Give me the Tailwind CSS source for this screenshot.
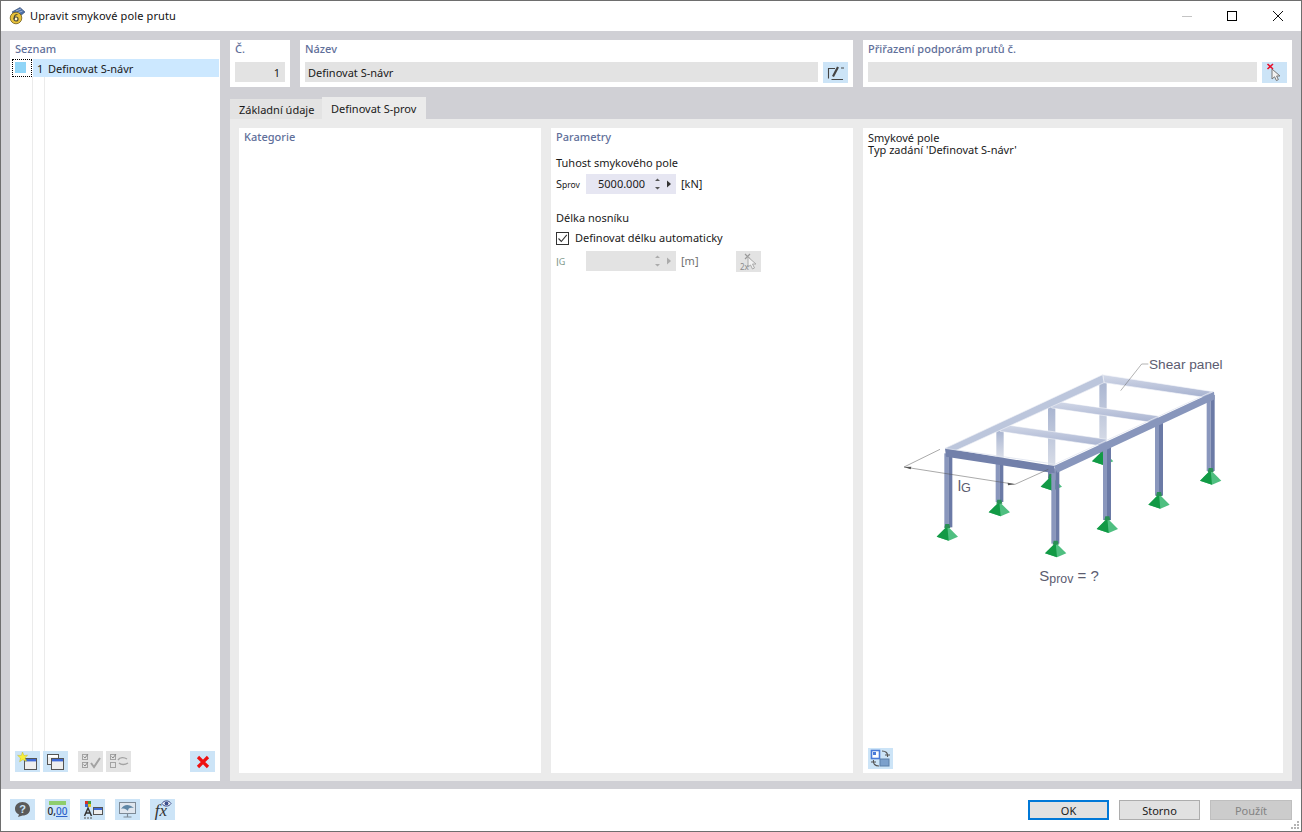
<!doctype html>
<html lang="cs">
<head>
<meta charset="UTF-8" />
<title>Upravit smykové pole prutu</title>
<script src="https://cdn.jsdelivr.net/npm/@tailwindcss/browser@4"></script>
</head>
<body class="bg-white">
<div class="w-[1302px] h-[832px] flex flex-col border border-[#6e6e6e] bg-white overflow-hidden font-['Noto_Sans',sans-serif] text-[11px] leading-4 text-[#1a1a1a]">

    <!-- Title bar -->
    <div class="h-[30px] shrink-0 flex items-center pl-[7px]">
        <svg width="18" height="18" viewBox="0 0 18 18">
            <path d="M4 5 L12 0.5 L17 5 L11 10Z" fill="#4d6fa8" stroke="#2f4468" stroke-width=".6"/>
            <path d="M8 4 L13 2 M9 6 L14.5 4" stroke="#b9c8e0" stroke-width=".8"/>
            <circle cx="8" cy="11" r="5.8" fill="#e8c23a" stroke="#6e5c17" stroke-width=".8"/>
            <circle cx="8" cy="12" r="2" fill="#fff6c8" stroke="#4a4a3a" stroke-width="1.2"/>
            <path d="M6.2 12 C6 8.5 7.5 7.5 9.5 7.5" fill="none" stroke="#4a4a3a" stroke-width="1.2"/>
        </svg>
        <span class="ml-[4px] text-[#111] tracking-[0.12px]">Upravit smykové pole prutu</span>
        <div class="ml-auto flex items-center">
            <div class="w-[10px] h-px bg-[#c4c4c4] mr-[35px]"></div>
            <div class="w-[10px] h-[10px] border border-black mr-[36px]"></div>
            <svg class="mr-[18px]" width="10" height="10" viewBox="0 0 10 10"><path d="M0 0 L10 10 M10 0 L0 10" stroke="#111" stroke-width="1"/></svg>
        </div>
    </div>

    <!-- Main area -->
    <div class="h-[758px] shrink-0 bg-[#d0d0d5] pl-[9px] pr-[9px] pt-[9px] pb-[8px] flex gap-[10px]">

        <!-- List -->
        <div class="w-[210px] bg-white flex flex-col">
            <div class="h-[19px] pl-[5px] pt-px font-medium text-[#5f6f9a]">Seznam</div>
            <div class="h-[18px] flex items-stretch">
                <div class="ml-[2px] w-[20px] border border-dotted border-black pl-[2px] pt-[2px]">
                    <div class="w-[11px] h-[11px] bg-[#90d5f7]"></div>
                </div>
                <div class="flex-1 mr-px ml-px bg-[#cce8ff] flex items-center pl-[4px] pt-px">
                    <span class="w-[11px]">1</span><span>Definovat S-návr</span>
                </div>
            </div>
            <div class="h-[674px] flex">
                <div class="ml-[22px] w-px bg-[#ebebeb]"></div>
                <div class="ml-[11px] w-px bg-[#ebebeb]"></div>
            </div>
            <div class="h-[21px] flex pl-[5px]">
                <div class="w-[25px] h-[21px] bg-[#cce4f7] flex items-center justify-center">
                    <svg width="21" height="19" viewBox="0 0 21 19">
                        <rect x="7.5" y="6.5" width="12" height="11" fill="#eee" stroke="#555"/>
                        <rect x="8" y="7" width="11" height="2.4" fill="#3f6ad8"/>
                        <path d="M5.5 0 L7 3.6 L10.6 3 L8 6 L9.6 9.2 L5.8 7.8 L2.6 9.8 L3.4 6 L.6 3.4 L4.3 3.4Z" fill="#f7ef3a" stroke="#b9ae1e" stroke-width=".4"/>
                    </svg>
                </div>
                <div class="ml-[3px] w-[25px] h-[21px] bg-[#cce4f7] flex items-center justify-center">
                    <svg width="21" height="19" viewBox="0 0 21 19">
                        <rect x="2.5" y="2.5" width="11" height="10" fill="#eee" stroke="#555"/>
                        <rect x="3" y="3" width="10" height="2.2" fill="#fff"/>
                        <rect x="6.5" y="6.5" width="12" height="11" fill="#eee" stroke="#555"/>
                        <rect x="7" y="7" width="11" height="2.4" fill="#3f6ad8"/>
                    </svg>
                </div>
                <div class="ml-[10px] w-[25px] h-[21px] bg-[#e3e3e3] flex items-center justify-center">
                    <svg width="21" height="19" viewBox="0 0 21 19" fill="none" stroke="#a3a3a3">
                        <rect x="2.5" y="2.5" width="5" height="5"/><rect x="2.5" y="10.5" width="5" height="5"/>
                        <path d="M3.5 4.5 L5 6 L8 2 M3.5 12.5 L5 14 L8 10" stroke="#8a8a8a"/>
                        <path d="M11 11 L14 15 L20 6" stroke-width="2"/>
                    </svg>
                </div>
                <div class="ml-[3px] w-[25px] h-[21px] bg-[#e3e3e3] flex items-center justify-center">
                    <svg width="21" height="19" viewBox="0 0 21 19" fill="none" stroke="#a3a3a3">
                        <rect x="2.5" y="2.5" width="5" height="5"/><rect x="2.5" y="10.5" width="5" height="5"/>
                        <path d="M3.5 4.5 L5 6 L8 2" stroke="#8a8a8a"/>
                        <path d="M10 8 C12 5 16 5 19 7 M20 11 C17 13 13 13 11 11" stroke-width="1.4"/>
                    </svg>
                </div>
                <div class="ml-[59px] w-[25px] h-[21px] bg-[#cce4f7] flex items-center justify-center">
                    <svg width="14" height="14" viewBox="0 0 14 14"><path d="M2 2 L12 12 M12 2 L2 12" stroke="#ee1111" stroke-width="3.2"/></svg>
                </div>
            </div>
        </div>

        <!-- Right column -->
        <div class="w-[1062px] flex flex-col">
            <!-- Top cards -->
            <div class="h-[47px] flex gap-[10px]">
                <div class="w-[60px] bg-white px-[5px] flex flex-col">
                    <div class="h-[22px] pt-px font-medium text-[#5f6f9a]">Č.</div>
                    <div class="h-[20px] bg-[#e3e3e3] flex items-center justify-end pr-[5px] pt-px">1</div>
                </div>
                <div class="w-[553px] bg-white px-[5px] flex flex-col">
                    <div class="h-[22px] pt-px font-medium text-[#5f6f9a]">Název</div>
                    <div class="flex gap-[5px]">
                        <div class="w-[513px] h-[20px] bg-[#e3e3e3] flex items-center pl-[3px] pt-px">Definovat S-návr</div>
                        <div class="w-[25px] h-[21px] bg-[#cce4f7] flex items-center justify-center">
                            <svg width="19" height="17" viewBox="0 0 19 17" fill="none" stroke="#444">
                                <path d="M9 4.5 H2.5 V14.5 M5.5 15.5 H17" stroke-width="1.1"/>
                                <path d="M7 12.5 L12 3" stroke-width="2.2"/><path d="M15 4 H18" stroke-width="1"/>
                            </svg>
                        </div>
                    </div>
                </div>
                <div class="w-[429px] bg-white px-[5px] flex flex-col">
                    <div class="h-[22px] pt-px font-medium text-[#5f6f9a]">Přiřazení podporám prutů č.</div>
                    <div class="flex gap-[5px]">
                        <div class="w-[389px] h-[20px] bg-[#e3e3e3]"></div>
                        <div class="w-[25px] h-[21px] bg-[#cce4f7] flex items-center justify-center">
                            <svg width="19" height="19" viewBox="0 0 19 19">
                                <path d="M7 6 L7 16 L9.6 13.8 L11.4 17.6 L13.4 16.6 L11.6 13 L15 13Z" fill="#f2f2f2" stroke="#777"/>
                                <path d="M2.5 1 L8 6 M8 1 L2.5 6" stroke="#e8112d" stroke-width="1.6"/>
                            </svg>
                        </div>
                    </div>
                </div>
            </div>

            <!-- Tabs -->
            <div class="h-[32px] pt-[10px] flex items-end">
                <div class="w-[92px] h-[20px] bg-[#e3e3e3] pl-[9px] flex items-center pt-px">Základní údaje</div>
                <div class="w-[104px] h-[22px] bg-[#ebebeb] pl-[9px] flex items-center pt-px">Definovat S-prov</div>
            </div>

            <!-- Tab body -->
            <div class="h-[662px] bg-[#ebebeb] pt-[9px] pb-[8px] pl-[9px] pr-[9px] flex gap-[10px]">
                <div class="w-[302px] bg-white pl-[5px] pt-px font-medium text-[#5f6f9a]">Kategorie</div>

                <div class="w-[302px] bg-white pl-[5px] pt-px flex flex-col">
                    <div class="h-[16px] font-medium text-[#5f6f9a]">Parametry</div>
                    <div class="mt-[10px] h-[16px]">Tuhost smykového pole</div>
                    <div class="mt-[3px] h-[20px] flex items-center">
                        <span class="w-[30px] text-[#1a1a1a]">S<span class="text-[8.5px]">prov</span></span>
                        <div class="w-[90px] h-[20px] bg-[#e6e6f2] flex items-center justify-end pr-[4px]">
                            <span class="mr-[7px]">5000.000</span>
                            <svg width="20" height="14" viewBox="0 0 20 14" fill="#555">
                                <path d="M3 4 L5.5 1.5 L8 4Z M3 10 L5.5 12.5 L8 10Z"/><path d="M15 3.5 L19 7 L15 10.5Z" fill="#333"/>
                            </svg>
                        </div>
                        <span class="ml-[5px]">[kN]</span>
                    </div>
                    <div class="mt-[16px] h-[16px]">Délka nosníku</div>
                    <div class="mt-[5px] h-[14px] flex items-center">
                        <div class="w-[13px] h-[13px] border border-[#333] flex items-center justify-center">
                            <svg width="11" height="11" viewBox="0 0 11 11" fill="none"><path d="M1.5 5.5 L4.3 8.5 L9.8 1.8" stroke="#333" stroke-width="1.1"/></svg>
                        </div>
                        <span class="ml-[6px]">Definovat délku automaticky</span>
                    </div>
                    <div class="mt-[6px] h-[21px] flex items-start">
                        <span class="w-[30px] h-[20px] flex items-center pt-px text-[#7f9a8c]">l<span class="text-[9px]">G</span></span>
                        <div class="w-[90px] h-[20px] bg-[#e3e3e3] flex items-center justify-end pr-[4px]">
                            <svg width="20" height="14" viewBox="0 0 20 14" fill="#ababab">
                                <path d="M3 4 L5.5 1.5 L8 4Z M3 10 L5.5 12.5 L8 10Z"/><path d="M15 3.5 L19 7 L15 10.5Z"/>
                            </svg>
                        </div>
                        <span class="w-[60px] pl-[5px] h-[20px] flex items-center text-[#707070]">[m]</span>
                        <div class="w-[25px] h-[21px] bg-[#e3e3e3]">
                            <svg width="25" height="21" viewBox="0 0 25 21">
                                <path d="M9 3 L14 8 M14 3 L9 8" stroke="#9a9a9a" stroke-width="1.2"/>
                                <path d="M12 6 L12 16 L14.5 14 L16.5 18 L18.5 17 L16.5 13 L20 13Z" fill="#f2f2f2" stroke="#aaa"/>
                                <text x="4" y="19" font-size="8" fill="#8a8a8a" font-family="Noto Sans">2x</text>
                            </svg>
                        </div>
                    </div>
                </div>

                <!-- Preview -->
                <div class="w-[420px] bg-white flex flex-col">
                    <div class="pl-[5px] pt-[4px] h-[181px] leading-[12px]">Smykové pole<br />Typ zadání 'Definovat S-návr'</div>
                    <svg class="ml-[17px] mt-[31px] shrink-0" width="360" height="260" viewBox="0 0 1080 780">
                        <defs>
                            <linearGradient id="beamLight" x1="0" y1="0" x2="0" y2="1"><stop offset="0" stop-color="#d3d9e8"/><stop offset="1" stop-color="#a6b1cf"/></linearGradient>
                            <linearGradient id="colLight" x1="0" y1="0" x2="0" y2="1"><stop offset="0" stop-color="#a8b4d0"/><stop offset="1" stop-color="#dde1ea"/></linearGradient>
                            <g id="base">
                                <path d="M-32 12 L0 -20 L32 12 L4 24Z" fill="#4fbf80"/>
                                <path d="M-32 12 L0 -20 L4 24Z" fill="#129a45"/>
                                <path d="M-9 -14 H9 L6 -26 H-6Z" fill="#2a8f55"/>
                            </g>
                        </defs>
                        <!-- back columns, seen through the frame -->
                        <rect x="658" y="118" width="22" height="220" fill="url(#colLight)"/>
                        <rect x="504" y="198" width="22" height="200" fill="url(#colLight)"/>
                        <rect x="349" y="270" width="22" height="90" fill="url(#colLight)"/>
                        <rect x="504" y="395" width="22" height="30" fill="#7886ad"/>
                        <rect x="660" y="325" width="20" height="22" fill="#7886ad"/>
                        <use href="#base" x="668" y="352"/>
                        <use href="#base" x="514" y="428"/>
                        <!-- light beams -->
                        <path d="M360 252 L680 298 L680 320 L360 274Z" fill="url(#beamLight)" stroke="#fff" stroke-width="1.5"/>
                        <path d="M515 182 L835 228 L835 250 L515 204Z" fill="url(#beamLight)" stroke="#fff" stroke-width="1.5"/>
                        <path d="M668 104 L1000 155 L972 172 L672 128Z" fill="url(#beamLight)" stroke="#f4f6fa" stroke-width="2"/>
                        <path d="M195 325 L668 104 L672 128 L222 334Z" fill="#bcc6dc" stroke="#eef0f6" stroke-width="2"/>
                        <!-- front columns -->
                        <rect x="193" y="340" width="12" height="222" fill="#8a97bd"/><rect x="205" y="345" width="12" height="217" fill="#6b7aa6"/>
                        <rect x="347" y="370" width="11" height="116" fill="#8a97bd"/><rect x="358" y="370" width="12" height="116" fill="#6b7aa6"/>
                        <rect x="825" y="245" width="12" height="222" fill="#8a97bd"/><rect x="837" y="245" width="12" height="222" fill="#6b7aa6"/>
                        <rect x="980" y="165" width="12" height="228" fill="#8a97bd"/><rect x="992" y="165" width="12" height="228" fill="#6b7aa6"/>
                        <rect x="669" y="322" width="12" height="218" fill="#8a97bd"/><rect x="681" y="316" width="12" height="224" fill="#6b7aa6"/>
                        <rect x="514" y="385" width="12" height="226" fill="#8a97bd"/><rect x="526" y="385" width="12" height="226" fill="#6b7aa6"/>
                        <!-- front beams -->
                        <path d="M195 325 L522 378 L524 400 L198 350Z" fill="#7280aa"/>
                        <path d="M195 325 L522 372" stroke="#dfe3ee" stroke-width="2.5"/>
                        <path d="M522 378 L1002 155 L1004 178 L532 398Z" fill="#8896bc"/>
                        <path d="M522 374 L1000 153" stroke="#e3e7f1" stroke-width="2.5"/>
                        <!-- supports -->
                        <use href="#base" x="202" y="578"/>
                        <use href="#base" x="358" y="505"/>
                        <use href="#base" x="527" y="628"/>
                        <use href="#base" x="682" y="555"/>
                        <use href="#base" x="837" y="482"/>
                        <use href="#base" x="992" y="410"/>
                        <!-- dimension lines -->
                        <path d="M72 381 L180 328 M72 381 L405 433 M405 433 L505 388" fill="none" stroke="#555" stroke-width="1.5"/>
                        <path d="M72 381 L94 380 L92 388Z M405 433 L383 428 L384 436Z" fill="#555"/>
                        <path d="M722 152 L785 72 L805 72" fill="none" stroke="#666" stroke-width="1.5"/>
                        <text x="807" y="86" font-family="Liberation Sans" font-size="41" fill="#5c5c70">Shear panel</text>
                        <text x="233" y="454" font-family="Liberation Sans" font-size="46" fill="#5c5c70">l<tspan font-size="38" dy="3">G</tspan></text>
                        <text x="478" y="722" font-family="Liberation Sans" font-size="45" fill="#5c5c70">S<tspan font-size="37" dy="6">prov</tspan><tspan dy="-6"> = ?</tspan></text>
                    </svg>
                    <div class="mt-auto ml-[5px] mb-[4px] w-[25px] h-[21px] bg-[#cce4f7] flex items-center justify-center">
                        <svg width="21" height="19" viewBox="0 0 21 19" fill="none">
                            <rect x="1.5" y="1.5" width="8" height="8" fill="#fff" stroke="#4a7bd8" stroke-width="1.6"/>
                            <rect x="3" y="3" width="3" height="3" fill="#4a7bd8"/>
                            <rect x="10" y="10" width="9" height="7" fill="#7ba0cc" stroke="#5a7ea8"/>
                            <path d="M12 2 C16 2 18 4 17.5 8 M15 6 H20 M9 17 C5 17 3 15 3.5 11 M1 13 H6" stroke="#555" stroke-width="1.1"/>
                        </svg>
                    </div>
                </div>
            </div>
        </div>
    </div>

    <!-- Footer -->
    <div class="flex-1 relative flex items-start pt-[10px] pl-[9px]">
        <div class="w-[25px] h-[21px] bg-[#cce4f7] flex items-center justify-center">
            <svg width="17" height="17" viewBox="0 0 17 17">
                <path d="M8.5 1 C13 1 16 4 16 8 C16 12 13 14.5 8.5 14.5 L4 16 L5 13.5 C2.5 12.5 1 10.5 1 8 C1 4 4 1 8.5 1Z" fill="#5a5a5a"/>
                <text x="8.5" y="12" text-anchor="middle" font-family="Liberation Sans" font-weight="bold" font-size="11" fill="#cce4f7">?</text>
            </svg>
        </div>
        <div class="ml-[10px] w-[25px] h-[21px] bg-[#cce4f7] flex flex-col items-center">
            <div class="mt-[2px] w-[17px] h-[4px] bg-[#8fce6c]"></div>
            <div class="text-[10px] leading-[13px] font-medium text-[#222]">0,<span class="text-[#2d62c9] underline">00</span></div>
        </div>
        <div class="ml-[10px] w-[25px] h-[21px] bg-[#cce4f7] flex items-center justify-center">
            <svg width="23" height="19" viewBox="0 0 23 19">
                <rect x="4" y="1" width="3" height="3" fill="#d93025"/><rect x="7" y="1" width="3" height="3" fill="#3a9e3a"/>
                <rect x="4" y="4" width="3" height="3" fill="#3d63c9"/><rect x="7" y="4" width="3" height="3" fill="#e3c21f"/>
                <path d="M3.5 16 L7 8 L10.5 16 M5 13 H9" fill="none" stroke="#333" stroke-width="1.5"/>
                <rect x="12.5" y="7.5" width="9" height="7" fill="#eee" stroke="#555"/><rect x="13" y="8" width="8" height="2" fill="#3f6ad8"/>
                <path d="M3 18 H11" stroke="#555" stroke-dasharray="2 1"/>
            </svg>
        </div>
        <div class="ml-[10px] w-[25px] h-[21px] bg-[#cce4f7] flex items-center justify-center">
            <svg width="21" height="19" viewBox="0 0 21 19">
                <rect x="2.5" y="2.5" width="16" height="11" fill="#dfe6ee" stroke="#7d8a96"/>
                <path d="M4 9 C7 4 12 4 17 8 C13 7 11 8 11 11 C9 9 7 8 4 9Z" fill="#5f87a6"/>
                <path d="M10.5 14 V16.5 M6.5 17 H14.5" stroke="#7d8a96" stroke-width="1.2"/>
            </svg>
        </div>
        <div class="ml-[10px] w-[25px] h-[21px] bg-[#cce4f7] flex items-end justify-center relative">
            <span class="font-['Liberation_Serif',serif] italic text-[17px] leading-[19px] text-[#333] mr-[3px]">fx</span>
            <svg class="absolute right-[3px] top-0" width="11" height="9" viewBox="0 0 11 9">
                <path d="M1 4.5 C3 1 8 1 10 4.5 C8 8 3 8 1 4.5Z" fill="#fff" stroke="#3d4f8c"/>
                <circle cx="5.5" cy="4.5" r="2" fill="#3d4f8c"/>
            </svg>
        </div>

        <div class="ml-auto mr-[9px] mt-px flex gap-[10px]">
            <div class="w-[81px] h-[20px] bg-[#e1e1e1] border-2 border-[#0078d7] flex items-center justify-center pt-px">OK</div>
            <div class="w-[81px] h-[20px] bg-[#e1e1e1] border border-[#adadad] flex items-center justify-center pt-px">Storno</div>
            <div class="w-[82px] h-[20px] bg-[#cccccc] border border-[#bfbfbf] text-[#838383] flex items-center justify-center pt-px">Použít</div>
        </div>
        <svg class="absolute right-px bottom-px" width="10" height="10" viewBox="0 0 10 10" fill="#b4b4b4">
            <rect x="7" y="1" width="2" height="2"/><rect x="4" y="4" width="2" height="2"/><rect x="7" y="4" width="2" height="2"/>
            <rect x="1" y="7" width="2" height="2"/><rect x="4" y="7" width="2" height="2"/><rect x="7" y="7" width="2" height="2"/>
        </svg>
    </div>
</div>
</body>
</html>
